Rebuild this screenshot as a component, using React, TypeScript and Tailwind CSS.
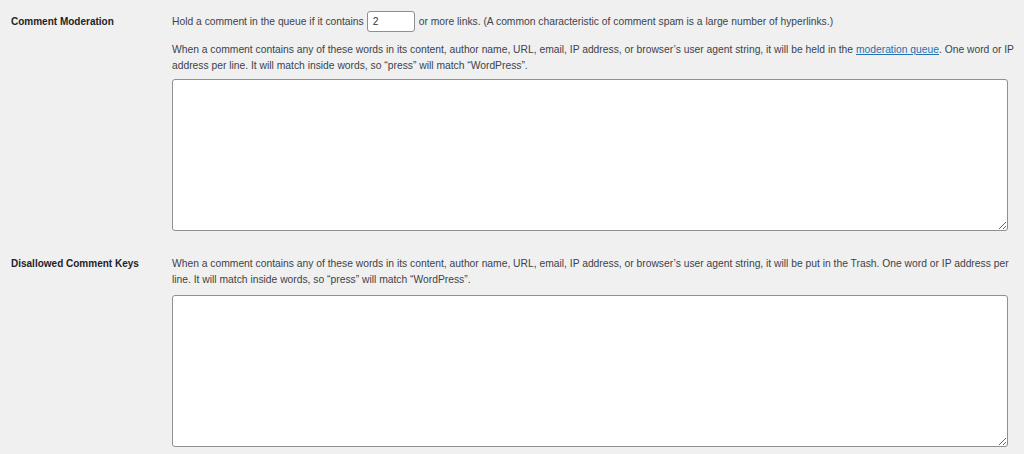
export default function App() {
  return (
    <div className="min-h-screen bg-[#f0f0f1] font-['Liberation_Sans',Arial,sans-serif] text-[10.3px] leading-[16px] text-[#3c434a]">
      <div className="flex pl-[11px] pt-[11px]">
        <div className="w-[161px] shrink-0 pt-[3px] text-[10px] font-bold text-[#1d2327]">Comment Moderation</div>
        <div className="w-[846px]">
          <div className="flex items-center">
            <span>Hold a comment in the queue if it contains</span>
            <input
              defaultValue="2"
              className="ml-[3px] mr-[4px] h-[21px] w-[48px] rounded-[3px] border border-[#8c8f94] bg-white px-[5px] text-[10.3px] text-[#2c3338]"
            />
            <span>or more links. (A common characteristic of comment spam is a large number of hyperlinks.)</span>
          </div>
          <p className="mt-[10px]">
            When a comment contains any of these words in its content, author name, URL, email, IP address, or browser’s user agent string, it will be held in the{' '}
            <a className="text-[#2271b1] underline">moderation queue</a>. One word or IP address per line. It will match inside words, so “press” will match “WordPress”.
          </p>
          <textarea className="mt-[5px] block h-[152px] w-[836px] rounded-[3px] border border-[#8c8f94] bg-white" />
        </div>
      </div>
      <div className="flex pl-[11px] pt-[25px]">
        <div className="w-[161px] shrink-0 text-[10px] font-bold text-[#1d2327]">Disallowed Comment Keys</div>
        <div className="w-[846px]">
          <p>
            When a comment contains any of these words in its content, author name, URL, email, IP address, or browser’s user agent string, it will be put in the Trash. One word or IP address per line. It will match inside words, so “press” will match “WordPress”.
          </p>
          <textarea className="mt-[7px] block h-[152px] w-[836px] rounded-[3px] border border-[#8c8f94] bg-white" />
        </div>
      </div>
    </div>
  );
}
